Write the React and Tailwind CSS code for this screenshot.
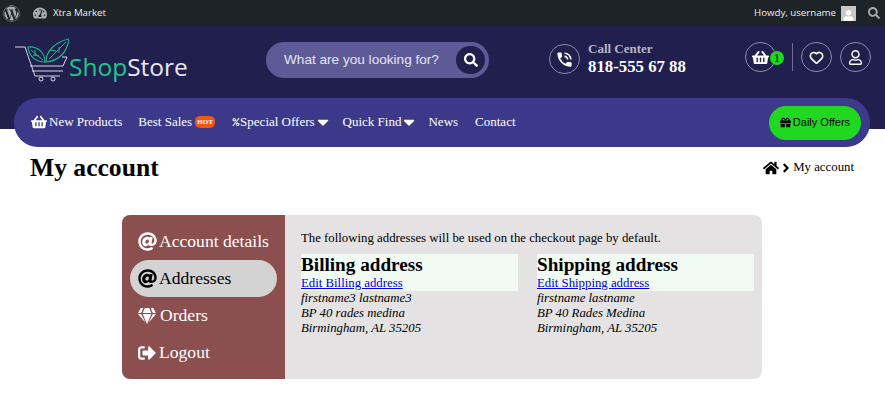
import React from "react";
import { Heart } from "lucide-react";
import { MdPhoneInTalk } from "react-icons/md";
import {
  FaWordpress,
  FaTachometerAlt,
  FaSearch,
  FaShoppingBasket,
  FaRegUser,
  FaUser,
  FaPercent,
  FaCaretDown,
  FaGift,
  FaHome,
  FaAngleRight,
  FaAt,
  FaGem,
  FaSignOutAlt,
} from "react-icons/fa";

function Logo() {
  return (
    <div className="flex items-end">
      <svg width="54" height="45" viewBox="0 0 54 45" fill="none" className="block">
        <path d="M0 9h10l10 29h25" stroke="#d9d7e6" strokeWidth="1" />
        <path d="M15 28h33l4-9h-5M17 33h31" stroke="#d9d7e6" strokeWidth="1" />
        <circle cx="26" cy="41" r="2" stroke="#d9d7e6" strokeWidth="1" />
        <circle cx="38" cy="41" r="2" stroke="#d9d7e6" strokeWidth="1" />
        <path d="M13 9c9-1 17 5 17 15-10 0-16-6-17-15z" stroke="#19b98a" strokeWidth="1.200" />
        <path d="M16 12l12 10M20 12v5M24 18l-6-1" stroke="#19b98a" strokeWidth="1" />
        <path d="M54 1c-2 13-10 22-23 23 0-11 9-20 23-23z" stroke="#19b98a" strokeWidth="1.200" />
        <path d="M51 4L34 21M44 9v6M41 13l-6-1" stroke="#19b98a" strokeWidth="1" />
      </svg>
      <div className="font-['Open_Sans',sans-serif] text-[24.500px] leading-[34px] -mb-[1px]">
        <span className="text-[#1cc98c]">Shop</span>
        <span className="text-[#e9e8f2]">Store</span>
      </div>
    </div>
  );
}

function RoundIcon({ children }) {
  return (
    <div className="w-[31px] h-[30px] rounded-full border border-[#8d8ca6] flex items-center justify-center text-white">
      {children}
    </div>
  );
}

function AccountLink({ icon, label, active }) {
  return (
    <div
      className={
        "h-[37px] rounded-full flex items-center gap-[2px] pl-[8px] text-[17.600px] whitespace-nowrap " +
        (active ? "bg-[#d3d3d3] text-black" : "text-white")
      }
    >
      {icon}
      <span>{label}</span>
    </div>
  );
}

function Address({ title, edit, lines, className }) {
  return (
    <div className={className}>
      <div className="w-[217px] h-[37px] bg-[#f1fbf4]">
        <h3 className="text-[19.200px] leading-[22px] font-bold text-black">{title}</h3>
        <a href="#" className="block text-[12.800px] leading-[15px] text-[#0000ee] underline">
          {edit}
        </a>
      </div>
      <div className="italic text-[12.800px] leading-[15px] text-black">
        {lines.map((l) => (
          <div key={l}>{l}</div>
        ))}
      </div>
    </div>
  );
}

export default function App() {
  return (
    <div className="w-[885px] h-[408px] bg-white overflow-hidden font-['Liberation_Serif',serif]">
      {/* wp admin bar */}
      <div className="h-[26px] bg-[#1d2327] flex items-center justify-between pl-[3px] pr-[5px] font-['Open_Sans',sans-serif] text-[9.700px] text-[#eef0f1]">
        <div className="flex items-center">
          <FaWordpress className="text-[17px] text-[#a7aaad]" />
          <FaTachometerAlt className="text-[14px] text-[#a7aaad] ml-[13px]" />
          <span className="ml-[6px]">Xtra Market</span>
        </div>
        <div className="flex items-center">
          <span>Howdy, username</span>
          <div className="w-[15px] h-[15px] bg-[#c8c8c8] ml-[5px] flex items-end justify-center overflow-hidden">
            <FaUser className="text-[11px] text-white" />
          </div>
          <FaSearch className="text-[12px] text-[#a7aaad] ml-[12px]" />
        </div>
      </div>

      {/* header */}
      <div className="h-[103px] bg-[#201f4e]">
        <div className="h-[72px] flex items-start pl-[15px]">
          <div className="w-[251px] pt-[12px]">
            <Logo />
          </div>
          <div className="mt-[16px] w-[223px] h-[36px] rounded-full bg-[#5d5a98] flex items-center justify-between pl-[18px] pr-[4px] font-['Liberation_Sans',sans-serif] text-[13.600px] text-[#e6e5f1]">
            <span>What are you looking for?</span>
            <div className="w-[29px] h-[28px] rounded-full bg-[#201f4e] flex items-center justify-center text-white">
              <FaSearch className="text-[14px]" />
            </div>
          </div>
          <div className="ml-[60px] mt-[16px] flex items-start">
            <div className="mt-[2px]">
              <RoundIcon>
                <MdPhoneInTalk className="text-[19px]" />
              </RoundIcon>
            </div>
            <div className="ml-[8px] font-bold">
              <div className="mt-[-1px] text-[13px] leading-[15px] text-[#b5b4c4]">Call Center</div>
              <div className="mt-[1px] text-[16.800px] leading-[20px] text-white whitespace-nowrap">818-555 67 88</div>
            </div>
          </div>
          <div className="ml-[59px] mt-[16px] flex items-center h-[30px]">
            <div className="relative">
              <RoundIcon>
                <FaShoppingBasket className="text-[17px]" />
              </RoundIcon>
              <span className="absolute left-[25px] top-[9px] w-[14px] h-[14px] rounded-full bg-[#1fd81f] text-black text-[13px] leading-[14px] text-center">
                1
              </span>
            </div>
            <div className="w-px h-[28px] bg-[#6f6e8c] ml-[16px] mr-[8px]" />
            <RoundIcon>
              <Heart size={15} strokeWidth={2.6} />
            </RoundIcon>
            <div className="w-[8px]" />
            <RoundIcon>
              <FaRegUser className="text-[15px]" />
            </RoundIcon>
          </div>
        </div>

        {/* nav */}
        <div className="ml-[14px] mr-[15px] h-[49px] rounded-[24px] bg-[#3c398a] flex items-center justify-between pl-[17px] pr-[9px] text-white text-[13px]">
          <div className="flex items-center -mt-[1px]">
            <FaShoppingBasket className="text-[16px] mr-[2px]" />
            <span>New Products</span>
            <span className="ml-[16px]">Best Sales</span>
            <span className="ml-[3px] h-[12px] w-[20px] text-center rounded-[5px] bg-[#f5560f] text-[7px] leading-[12px] font-bold">HOT</span>
            <FaPercent className="text-[8px] ml-[17px]" />
            <span>Special Offers</span>
            <FaCaretDown className="text-[18px] -ml-[1px]" />
            <span className="ml-[11px]">Quick Find</span>
            <FaCaretDown className="text-[18px] -ml-[1px]" />
            <span className="ml-[10px]">News</span>
            <span className="ml-[17px]">Contact</span>
          </div>
          <div className="w-[92px] h-[34px] rounded-full bg-[#1fd81f] flex items-center justify-center gap-[2px] font-['Liberation_Sans',sans-serif] text-[11px] text-black">
            <FaGift className="text-[11px]" />
            <span>Daily Offers</span>
          </div>
        </div>
      </div>

      {/* title row */}
      <div className="mt-[20px] flex items-center justify-between pl-[30px] pr-[31px]">
        <h1 className="text-[25.600px] leading-[38px] font-bold text-black">My account</h1>
        <div className="flex items-center text-[12.800px] text-black">
          <FaHome className="text-[16px]" />
          <FaAngleRight className="text-[14px]" />
          <span>My account</span>
        </div>
      </div>

      {/* account panel */}
      <div className="ml-[122px] mt-[28px] w-[640px] h-[164px] rounded-[8px] overflow-hidden flex bg-[#e4e2e3]">
        <div className="w-[163px] bg-[#8c4f50] px-[8px] pt-[8px]">
          <AccountLink icon={<FaAt className="text-[19px]" />} label="Account details" />
          <AccountLink icon={<FaAt className="text-[19px]" />} label="Addresses" active />
          <AccountLink icon={<FaGem className="text-[18px] mr-[2px]" />} label="Orders" />
          <AccountLink icon={<FaSignOutAlt className="text-[18px] mr-[1px]" />} label="Logout" />
        </div>
        <div className="pl-[16px] pt-[16px] text-black">
          <p className="text-[12.800px] leading-[15px]">
            The following addresses will be used on the checkout page by default.
          </p>
          <div className="flex mt-[8px]">
            <Address
              title="Billing address"
              edit="Edit Billing address"
              lines={["firstname3 lastname3", "BP 40 rades medina", "Birmingham, AL 35205"]}
            />
            <Address
              className="ml-[19px]"
              title="Shipping address"
              edit="Edit Shipping address"
              lines={["firstname lastname", "BP 40 Rades Medina", "Birmingham, AL 35205"]}
            />
          </div>
        </div>
      </div>
    </div>
  );
}
